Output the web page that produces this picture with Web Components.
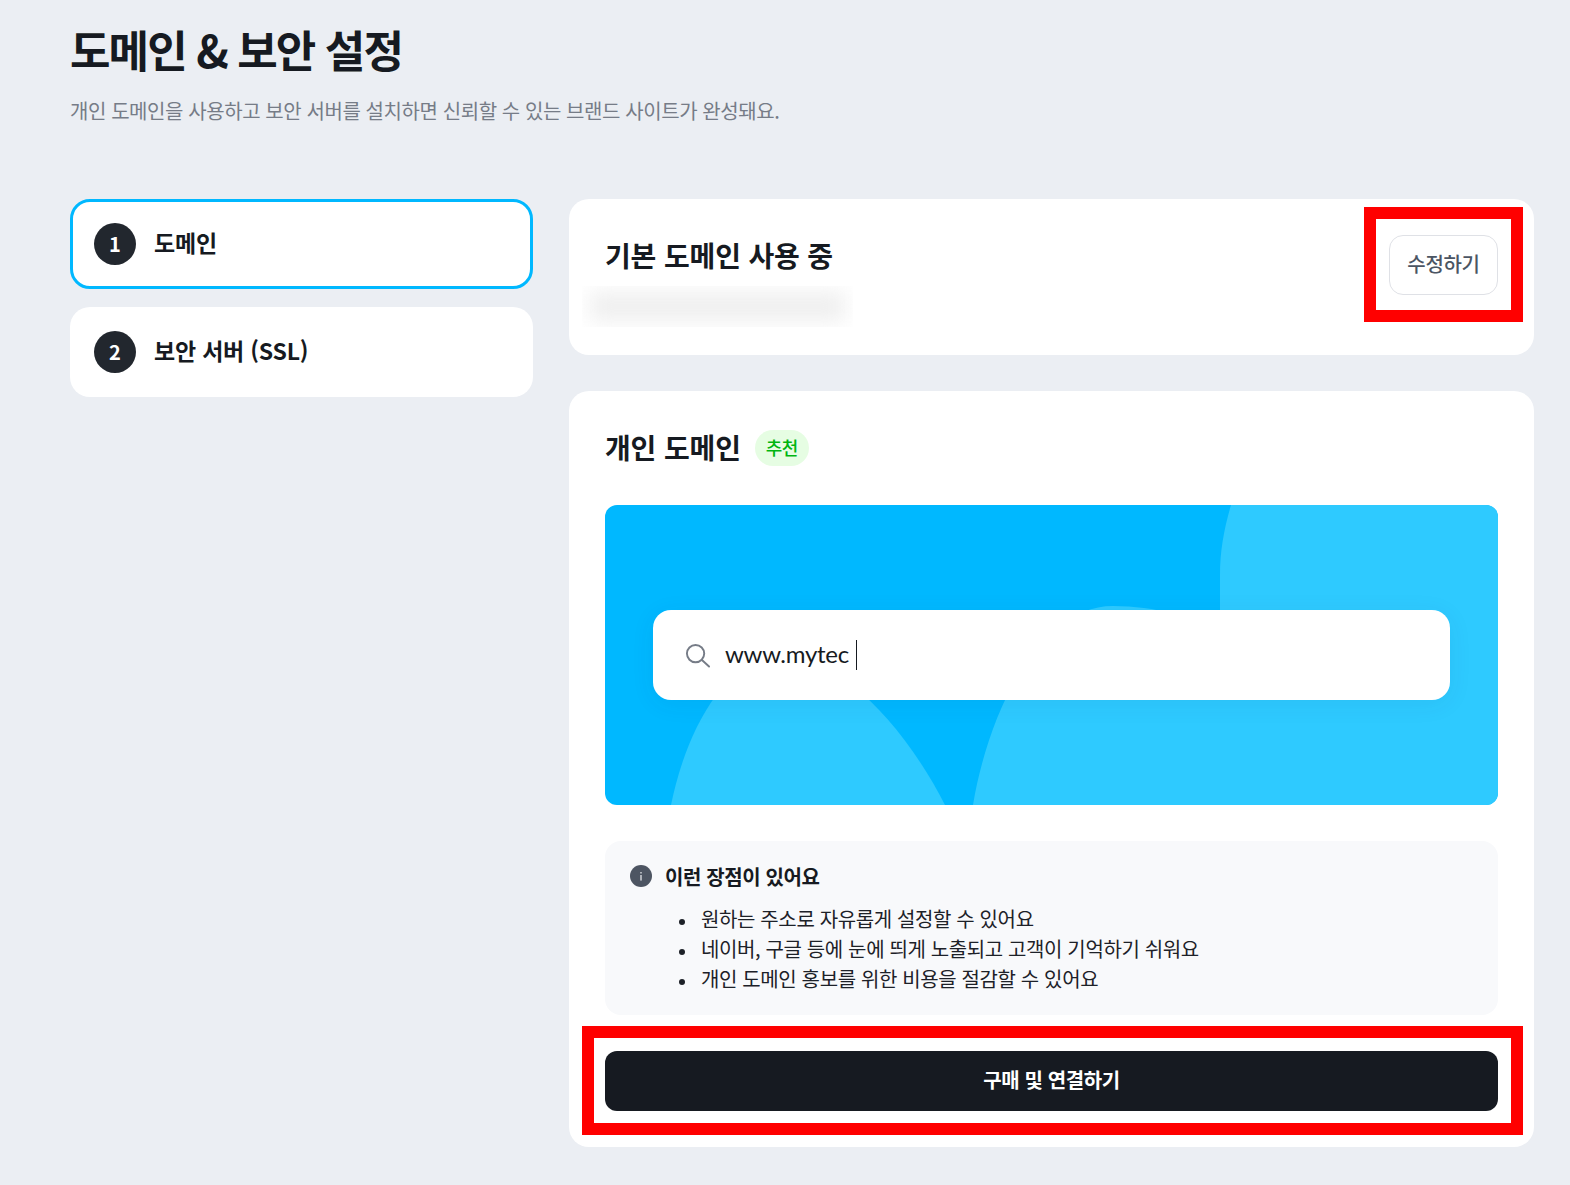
<!DOCTYPE html>
<html lang="ko">
<head>
<meta charset="utf-8">
<title>도메인 &amp; 보안 설정</title>
<style>
  html, body { margin:0; padding:0; background:#ebeef3; }
  body { font-family:"Noto Sans CJK KR","Noto Sans",sans-serif; color:#161a21; }
</style>
</head>
<body>
<settings-page>
  <span slot="title">도메인 &amp; 보안 설정</span>
  <span slot="desc">개인 도메인을 사용하고 보안 서버를 설치하면 신뢰할 수 있는 브랜드 사이트가 완성돼요.</span>

  <step-item slot="steps" num="1" active>도메인</step-item>
  <step-item slot="steps" num="2">보안 서버 (SSL)</step-item>

  <current-domain-card slot="main">기본 도메인 사용 중</current-domain-card>
  <custom-domain-card slot="main">
    <search-banner slot="banner" value="www.mytec"></search-banner>
    <benefit-box slot="info" heading="이런 장점이 있어요">
      <li>원하는 주소로 자유롭게 설정할 수 있어요</li>
      <li>네이버, 구글 등에 눈에 띄게 노출되고 고객이 기억하기 쉬워요</li>
      <li>개인 도메인 홍보를 위한 비용을 절감할 수 있어요</li>
    </benefit-box>
  </custom-domain-card>
</settings-page>

<script>
// 페이지 껍데기 : 제목 + 좌측 단계 + 우측 카드
class SettingsPage extends HTMLElement {
  connectedCallback() {
    this.attachShadow({ mode: "open" }).innerHTML = `<style>
      :host { display:block; padding:0 36px 38px 70px; }
      h1 { margin:0; padding-top:19px; font-size:44px; line-height:60px; font-weight:700; letter-spacing:-1.9px; }
      p { margin:0; padding-top:17px; font-size:20px; line-height:30px; letter-spacing:-.42px; color:#767c87; }
      .cols { display:grid; grid-template-columns:463px 965px; gap:36px; margin-top:73px; align-items:start; }
      .left { display:flex; flex-direction:column; gap:18px; }
      .right { display:flex; flex-direction:column; gap:36px; }
    </style>
    <h1><slot name="title"></slot></h1>
    <p><slot name="desc"></slot></p>
    <div class="cols">
      <div class="left"><slot name="steps"></slot></div>
      <div class="right"><slot name="main"></slot></div>
    </div>`;
  }
}

class StepItem extends HTMLElement {
  connectedCallback() {
    this.attachShadow({ mode: "open" }).innerHTML = `<style>
      :host { display:flex; align-items:center; gap:18px; box-sizing:border-box; height:90px; padding:0 21px;
        background:#fff; border:3px solid transparent; border-radius:20px; font-size:23px; font-weight:600; letter-spacing:-.2px; color:#161a21; }
      :host([active]) { border-color:#00b8ff; }
      .num { display:flex; align-items:center; justify-content:center; box-sizing:border-box; width:42px; height:42px; padding-bottom:2px; border-radius:50%;
        background:#22272e; color:#fff; font-size:20px; font-weight:700; letter-spacing:0; }
      .label { padding-bottom:4px; }
    </style><span class="num">${this.getAttribute("num")}</span><span class="label"><slot></slot></span>`;
  }
}

// 빨간 강조 박스 (스크린샷 위 주석)
class MarkBox extends HTMLElement {
  connectedCallback() {
    this.attachShadow({ mode: "open" }).innerHTML = `<style>
      :host { display:block; position:absolute; box-sizing:border-box; border:12px solid #f00; pointer-events:none; }
    </style>`;
  }
}

class CurrentDomainCard extends HTMLElement {
  connectedCallback() {
    this.attachShadow({ mode: "open" }).innerHTML = `<style>
      :host { display:flex; justify-content:space-between; position:relative; box-sizing:border-box; height:156px; padding:36px;
        background:#fff; border-radius:20px; }
      h2 { margin:0; padding-bottom:2px; height:40px; font-size:28px; line-height:40px; font-weight:700; letter-spacing:-.15px; }
      .blur { width:271px; height:41px; margin:9px 0 0 -23px; overflow:hidden; }
      .blur i { display:block; width:255px; height:29px; margin:6px 8px; background:#efefef; filter:blur(10px); }
      button { width:109px; height:60px; padding:0 0 3px; border:1px solid #dfe1e6; border-radius:14px; background:#fff;
        font:500 20px "Noto Sans CJK KR",sans-serif; letter-spacing:-.3px; color:#4b5563; }
      mark-box { top:8px; right:11px; width:159px; height:115px; }
    </style>
    <div><h2><slot></slot></h2><div class="blur"><i></i></div></div>
    <button>수정하기</button>
    <mark-box></mark-box>`;
  }
}

class CustomDomainCard extends HTMLElement {
  connectedCallback() {
    this.attachShadow({ mode: "open" }).innerHTML = `<style>
      :host { display:flex; flex-direction:column; gap:36px; position:relative; box-sizing:border-box; padding:36px; background:#fff; border-radius:20px; }
      .head { display:flex; align-items:center; gap:14px; height:42px; }
      h2 { margin:0; padding-bottom:2px; font-size:28px; line-height:40px; font-weight:700; letter-spacing:-.15px; }
      .pill { display:flex; align-items:center; box-sizing:border-box; height:36px; padding:0 11px 2px; border-radius:18px; background:#e6fde3; color:#00b50f;
        font-size:18px; font-weight:500; letter-spacing:-.6px; }
      button { height:60px; padding:0 0 3px; border:0; border-radius:12px; background:#161a21; color:#fff;
        font:700 20px "Noto Sans CJK KR",sans-serif; letter-spacing:-.4px; }
      mark-box { left:13px; right:11px; bottom:12px; height:109px; }
    </style>
    <div class="head"><h2>개인 도메인</h2><span class="pill">추천</span></div>
    <slot name="banner"></slot>
    <slot name="info"></slot>
    <button>구매 및 연결하기</button>
    <mark-box></mark-box>`;
  }
}

class SearchBanner extends HTMLElement {
  connectedCallback() {
    const v = this.getAttribute("value") || "";
    this.attachShadow({ mode: "open" }).innerHTML = `<style>
      :host { display:flex; align-items:center; position:relative; box-sizing:border-box; height:300px; padding:0 48px;
        background:#00b8ff; border-radius:12px; overflow:hidden; }
      .bg { position:absolute; inset:0; width:100%; height:100%; }
      .box { position:relative; display:flex; align-items:center; width:100%; height:90px; box-sizing:border-box; padding-left:32px;
        background:#fff; border-radius:18px; box-shadow:0 4px 24px rgba(0,60,110,.07); }
      svg.s { width:25px; height:25px; margin-right:15px; flex:none; }
      .v { padding-bottom:2px; font:24px/30px Lato,"Noto Sans",sans-serif; letter-spacing:-.25px; color:#161a21; }
      .caret { width:1.5px; height:30px; margin-left:7px; background:#161a21; }
    </style>
    <svg class="bg" viewBox="0 0 893 300" preserveAspectRatio="none" aria-hidden="true">
      <path fill="#2ecaff" d="M66 300C82 222 122 150 180 150C228 150 295 212 340 300Z"/>
      <path fill="#2ecaff" d="M368 300C382 215 430 101 508 101C550 101 590 112 615 130V70C615 46 619 24 626 0H893V300Z"/>
    </svg>
    <div class="box">
      <svg class="s" viewBox="0 0 26 26" fill="none" stroke="#767c87" stroke-width="2" stroke-linecap="round" aria-hidden="true">
        <circle cx="11" cy="11" r="9"/><path d="M17.6 17.6L25 24.5"/>
      </svg>
      <span class="v">${v}</span><span class="caret"></span>
    </div>`;
  }
}

class BenefitBox extends HTMLElement {
  connectedCallback() {
    this.attachShadow({ mode: "open" }).innerHTML = `<style>
      :host { display:block; box-sizing:border-box; height:174px; padding:20px 25px; background:#f8f9fb; border-radius:16px; }
      .t { display:flex; align-items:center; gap:13px; height:30px; font-size:20px; font-weight:700; letter-spacing:-.4px; }
      svg { width:22px; height:22px; flex:none; }
      ul { margin:13px 0 0; padding:0 0 0 71px; list-style:none; font-size:20px; line-height:30px; letter-spacing:-.37px; color:#1d2128; }
      ::slotted(li)::before { content:""; display:inline-block; width:6px; height:6px; margin:0 16px 0 -22px; border-radius:50%;
        background:#1d2128; vertical-align:middle; }
    </style>
    <div class="t">
      <svg viewBox="0 0 22 22" aria-hidden="true"><circle cx="11" cy="11" r="11" fill="#4d5562"/><rect x="10.3" y="10" width="1.4" height="5.6" fill="#d8dade"/><rect x="10.3" y="7" width="1.4" height="1.5" fill="#d8dade"/></svg>
      <span>${this.getAttribute("heading")}</span>
    </div>
    <ul><slot></slot></ul>`;
  }
}

customElements.define("mark-box", MarkBox);
customElements.define("step-item", StepItem);
customElements.define("search-banner", SearchBanner);
customElements.define("benefit-box", BenefitBox);
customElements.define("current-domain-card", CurrentDomainCard);
customElements.define("custom-domain-card", CustomDomainCard);
customElements.define("settings-page", SettingsPage);
</script>
</body>
</html>
